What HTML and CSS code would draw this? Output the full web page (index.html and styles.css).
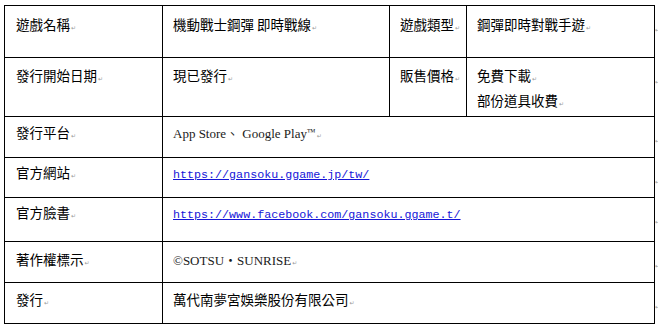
FILE: index.html
```html
<!DOCTYPE html>
<html lang="zh-Hant">
<head>
<meta charset="utf-8">
<title>遊戲資訊</title>
<link rel="stylesheet" href="styles.css">
</head>
<body>
<table class="info">
  <colgroup>
    <col class="c1"><col class="c2"><col class="c3"><col class="c4"><col class="ce">
  </colgroup>
  <tr class="r1">
    <td>遊戲名稱<span class="pm">↵</span></td>
    <td>機動戰士鋼彈 即時戰線<span class="pm">↵</span></td>
    <td>遊戲類型<span class="pm">↵</span></td>
    <td>鋼彈即時對戰手遊<span class="pm">↵</span></td>
    <td class="eor"><span class="pm">↵</span></td>
  </tr>
  <tr class="r2">
    <td>發行開始日期<span class="pm">↵</span></td>
    <td>現已發行<span class="pm">↵</span></td>
    <td>販售價格<span class="pm">↵</span></td>
    <td>免費下載<span class="pm">↵</span><br>部份道具收費<span class="pm">↵</span></td>
    <td class="eor"><span class="pm">↵</span></td>
  </tr>
  <tr class="r3">
    <td>發行平台<span class="pm">↵</span></td>
    <td colspan="3"><span class="latin">App Store、 Google Play<span class="tm">™</span></span><span class="pm">↵</span></td>
    <td class="eor"><span class="pm">↵</span></td>
  </tr>
  <tr class="r4">
    <td>官方網站<span class="pm">↵</span></td>
    <td colspan="3"><a class="link" href="#">https://gansoku.ggame.jp/tw/</a></td>
    <td class="eor"><span class="pm">↵</span></td>
  </tr>
  <tr class="r5">
    <td>官方臉書<span class="pm">↵</span></td>
    <td colspan="3"><a class="link" href="#">https://www.facebook.com/gansoku.ggame.t/</a></td>
    <td class="eor"><span class="pm">↵</span></td>
  </tr>
  <tr class="r6">
    <td>著作權標示<span class="pm">↵</span></td>
    <td colspan="3"><span class="latin">©SOTSU・SUNRISE</span><span class="pm">↵</span></td>
    <td class="eor"><span class="pm">↵</span></td>
  </tr>
  <tr class="r7">
    <td>發行<span class="pm">↵</span></td>
    <td colspan="3">萬代南夢宮娛樂股份有限公司<span class="pm">↵</span></td>
    <td class="eor"><span class="pm">↵</span></td>
  </tr>
</table>
</body>
</html>
```
FILE: styles.css
```css
html, body {
  margin: 0;
  padding: 0;
  background: #ffffff;
}

body {
  padding: 5px 0 0 4px;
  font-family: "Noto Sans CJK TC", "Noto Sans", sans-serif;
  font-size: 13.5px;
  color: #000000;
}

.info {
  border-collapse: collapse;
  table-layout: fixed;
  width: 654px;
}

.c1 { width: 158px; }
.c2 { width: 227px; }
.c3 { width: 77px; }
.c4 { width: 188px; }
.ce { width: 4px; }

.info td {
  box-sizing: border-box;
  border: 1px solid #000000;
  vertical-align: top;
  padding: 6px 0 0 10px;
  line-height: 25px;
  white-space: nowrap;
  overflow: hidden;
}

.info td:first-child {
  padding-left: 11px;
}

.info td.eor {
  border: none;
  padding: 8px 0 0 0;
  overflow: visible;
}

.r1 td { height: 52px; }
.r2 td { height: 59px; padding-top: 5px; }
.r3 td { height: 41px; padding-top: 3px; }
.r4 td { height: 40px; padding-top: 2px; }
.r5 td { height: 44px; padding-top: 2px; }
.r6 td { height: 41px; padding-top: 5px; }
.r7 td { height: 41px; padding-top: 4px; }

.pm {
  font-family: "DejaVu Sans", sans-serif;
  font-size: 6px;
  line-height: 1;
  color: #9a9a9a;
  margin-left: 1px;
}

.eor .pm {
  margin-left: 0;
}

.latin {
  font-family: "Liberation Serif", "Noto Sans CJK TC", serif;
  font-size: 13px;
  line-height: 1;
  color: #1a1a1a;
}

.tm {
  font-size: 9px;
  vertical-align: 3px;
}

.link {
  font-family: "Liberation Mono", monospace;
  font-size: 11.7px;
  line-height: 1;
  color: #1515d8;
  text-decoration: underline;
}
```
